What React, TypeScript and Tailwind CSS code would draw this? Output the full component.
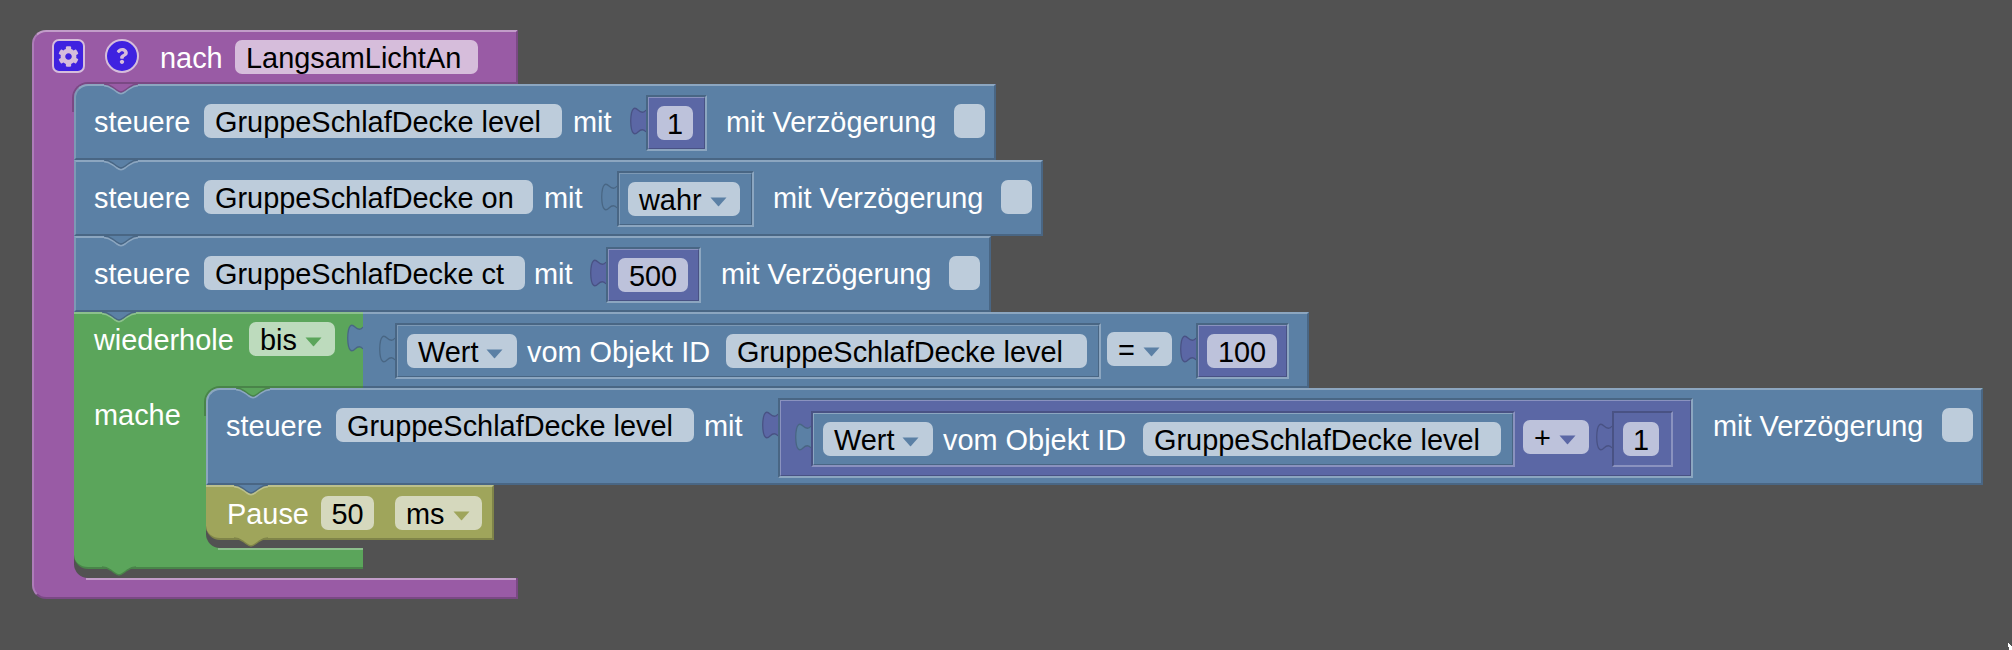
import React from 'react';
import { FaCog, FaQuestion } from 'react-icons/fa';

const BG = 'bg-[#525252]';

function Label({ className = '', children }: { className?: string; children: React.ReactNode }) {
  return <span className={`block shrink-0 text-white text-[28.9px] leading-[36px] whitespace-nowrap ${className}`}>{children}</span>;
}

function Field({ className = '', children }: { className?: string; children: React.ReactNode }) {
  return (
    <div className={`h-[34px] rounded-[7px] pl-[11px] text-black text-[28.9px] leading-[36px] whitespace-nowrap shrink-0 ${className}`}>
      {children}
    </div>
  );
}

function NumField({ className = '', children }: { className?: string; children: React.ReactNode }) {
  return (
    <div className={`h-[34px] rounded-[7px] text-center text-black text-[28.9px] leading-[36px] shrink-0 ${className}`}>
      {children}
    </div>
  );
}

function Arrow({ fill, className = '' }: { fill: string; className?: string }) {
  return (
    <svg width="17" height="10" viewBox="0 0 17 10" className={`shrink-0 ${className}`}>
      <path d="M0.5 0.5 H16.5 L9 9 Q8.5 9.5 8 9 Z" fill={fill} />
    </svg>
  );
}

function Drop({ className = '', arrow, children }: { className?: string; arrow: string; children: React.ReactNode }) {
  return (
    <div className={`h-[34px] rounded-[7px] pl-[11px] flex items-start text-black text-[28.9px] leading-[36px] whitespace-nowrap shrink-0 ${className}`}>
      <span>{children}</span>
      <Arrow fill={arrow} className="ml-[8px] mt-[15px]" />
    </div>
  );
}

function Check({ className = '' }: { className?: string }) {
  return <div className={`w-[31px] h-[34px] rounded-[7px] bg-[#bdccdb] shrink-0 ${className}`} />;
}

// puzzle tab sticking out to the left of a value block
function Tab({ fill, edge, className = '' }: { fill: string; edge: string; className?: string }) {
  const d = 'M16 3 C14 6 11 6 8 3 C5 0 1 -0.5 0.7 14 C1 28.5 5 28 8 25 C11 22 14 22 16 25';
  return (
    <svg width="16" height="29" viewBox="0 0 16 29" className={`shrink-0 overflow-visible ${className}`}>
      <path d={`${d} Z`} fill={fill} />
      <path d={d} fill="none" stroke={edge} strokeWidth="1.3" />
    </svg>
  );
}

// the bump of the block above, cut into the top of a statement block
function Notch({ fill, edge, rim, className = '' }: { fill: string; edge: string; rim?: string; className?: string }) {
  const d = 'M0 0 C5 0 7 2 10 4 L12 5.5 C14 7 15 8 17 8 C19 8 20 7 22 5.5 L24 4 C27 2 29 0 34 0';
  return (
    <svg width="34" height="11" viewBox="0 0 34 11" className={`absolute left-[28px] overflow-visible ${className}`}>
      {rim && <path d={d} fill="none" stroke={rim} strokeWidth="1.8" transform="translate(0 1.6)" />}
      <path d={`${d} Z`} fill={fill} />
      <path d={d} fill="none" stroke={edge} strokeWidth="1.4" />
    </svg>
  );
}

function SetBlock({ className = '', notch, children }: { className?: string; notch: [string, string]; children: React.ReactNode }) {
  return (
    <div className={`relative flex items-start h-[76px] pl-[18px] pt-[18px] bg-[#5b80a5] border-l-2 border-l-[#7d99b5] border-t-2 border-t-[#8ca6c0] border-b-2 border-b-[#496684] border-r-2 border-r-[#496684] ${className}`}>
      <Notch fill={notch[0]} edge={notch[1]} rim="#8ca6c0" className="-top-[2px] left-[26px]" />
      {children}
    </div>
  );
}

function VioletBox({ className = '', children }: { className?: string; children: React.ReactNode }) {
  return (
    <div className={`border-2 border-t-[#496684] border-l-[#496684] border-r-[#8ca6c0] border-b-[#8ca6c0] shrink-0 ${className}`}>
      <div className="h-full flex items-start bg-[#5b67a5] border border-t-[#8a92bf] border-l-[#8a92bf] border-r-[#495284] border-b-[#495284]">
        {children}
      </div>
    </div>
  );
}

function BlueBox({ className = '', children }: { className?: string; children: React.ReactNode }) {
  return (
    <div className={`border-2 border-t-[#496684] border-l-[#496684] border-r-[#8ca6c0] border-b-[#8ca6c0] shrink-0 ${className}`}>
      <div className="h-full flex items-start bg-[#5b80a5] border border-t-[#7d99b5] border-l-[#7d99b5] border-r-[#496684] border-b-[#496684]">
        {children}
      </div>
    </div>
  );
}

function BlueBoxOnViolet({ className = '', children }: { className?: string; children: React.ReactNode }) {
  return (
    <div className={`border-2 border-t-[#495284] border-l-[#495284] border-r-[#8a92bf] border-b-[#8a92bf] shrink-0 ${className}`}>
      <div className="h-full flex items-start bg-[#5b80a5] border border-t-[#8ca6c0] border-l-[#8ca6c0] border-r-[#496684] border-b-[#496684]">
        {children}
      </div>
    </div>
  );
}

function VioletOnViolet({ className = '', children }: { className?: string; children: React.ReactNode }) {
  return (
    <div className={`border-2 border-t-[#495284] border-l-[#495284] border-r-[#8a92bf] border-b-[#8a92bf] shrink-0 ${className}`}>
      <div className="h-full flex items-start bg-[#5b67a5]">{children}</div>
    </div>
  );
}

const BLUE: [string, string] = ['#5b80a5', '#496684'];
const PURPLE: [string, string] = ['#995ba5', '#7a4984'];
const GREEN: [string, string] = ['#5ba55b', '#498449'];

export default function App() {
  return (
    <div className={`relative w-[2012px] h-[650px] overflow-hidden ${BG} pl-[32px] pt-[30px] [font-family:'Liberation_Sans',Arial,sans-serif]`}>
      {/* hat block header */}
      <div className="flex items-start w-[486px] h-[54px] pl-[18px] pt-[7px] rounded-tl-[14px] bg-[#995ba5] border-t-2 border-t-[#c29dc9] border-l-2 border-l-[#ad7db8] border-r-2 border-r-[#7a4984]">
        <div className="w-[33px] h-[34px] rounded-[7px] bg-[#3f22e0] border-2 border-[#d6bddb] flex items-center justify-center shrink-0">
          <FaCog size={21} color="#d6bddb" />
        </div>
        <div className="ml-[20px] w-[34px] h-[34px] rounded-full bg-[#3f22e0] border-2 border-[#d6bddb] flex items-center justify-center shrink-0">
          <FaQuestion size={16} color="#d6bddb" />
        </div>
        <Label className="ml-[21px] w-[63px] mt-[1px]">nach</Label>
        <Field className="ml-[12px] mt-[1px] w-[243px] bg-[#d6bddb]">LangsamLichtAn</Field>
      </div>

      {/* arm of the hat block */}
      <div className="w-[486px] bg-[#995ba5] pl-[40px] border-l-2 border-l-[#ad7db8]">
        <div className={`w-[444px] ${BG} rounded-bl-[14px] pb-[9px]`}>
          <div className="relative w-[922px] bg-[#995ba5]">
            <div className="absolute -left-[2px] -top-[2px] w-[444px] h-[30px] rounded-tl-[16px] border-t-2 border-l-2 border-[#7a4984]" />
            <SetBlock notch={PURPLE} className="w-[922px] rounded-tl-[14px]">
              <Label className="w-[96px]">steuere</Label>
              <Field className="ml-[14px] w-[358px] bg-[#bdccdb]">GruppeSchlafDecke level</Field>
              <Label className="ml-[11px] w-[38px]">mit</Label>
              <Tab fill="#5b67a5" edge="#495284" className="ml-[19px] mt-[3px]" />
              <VioletBox className="-mt-[9px] w-[61px] h-[56px]">
                <NumField className="ml-[8px] mt-[8px] w-[36px] bg-[#bdc2db]">1</NumField>
              </VioletBox>
              <Label className="ml-[19px] w-[212px]">mit Verzögerung</Label>
              <Check className="ml-[16px]" />
            </SetBlock>
          </div>
          <SetBlock notch={BLUE} className="w-[969px]">
            <Label className="w-[96px]">steuere</Label>
            <Field className="ml-[14px] w-[329px] bg-[#bdccdb]">GruppeSchlafDecke on</Field>
            <Label className="ml-[11px] w-[38px]">mit</Label>
            <Tab fill="#5b80a5" edge="#496684" className="ml-[19px] mt-[3px]" />
            <BlueBox className="-mt-[9px] w-[137px] h-[56px]">
              <Drop className="ml-[8px] mt-[8px] w-[112px] bg-[#bdccdb]" arrow="#5b80a5">wahr</Drop>
            </BlueBox>
            <Label className="ml-[19px] w-[212px]">mit Verzögerung</Label>
            <Check className="ml-[16px]" />
          </SetBlock>
          <SetBlock notch={BLUE} className="w-[917px]">
            <Label className="w-[96px]">steuere</Label>
            <Field className="ml-[14px] w-[321px] bg-[#bdccdb]">GruppeSchlafDecke ct</Field>
            <Label className="ml-[9px] w-[38px]">mit</Label>
            <Tab fill="#5b67a5" edge="#495284" className="ml-[18px] mt-[3px]" />
            <VioletBox className="-mt-[9px] w-[95px] h-[56px]">
              <NumField className="ml-[9px] mt-[8px] w-[70px] bg-[#bdc2db]">500</NumField>
            </VioletBox>
            <Label className="ml-[20px] w-[212px]">mit Verzögerung</Label>
            <Check className="ml-[16px]" />
          </SetBlock>

          {/* repeat block */}
          <div className="relative">
            <Notch fill={BLUE[0]} edge={BLUE[1]} rim="#8cc08c" className="top-0 z-10" />
            <div className="flex items-start h-[76px]">
              <div className="flex items-start w-[289px] h-[76px] pl-[20px] pt-[8px] bg-[#5ba55b] border-t-2 border-t-[#8cc08c] shrink-0">
                <Label className="w-[140px]">wiederhole</Label>
                <Drop className="ml-[15px] w-[86px] bg-[#bddbbd]" arrow="#5ba55b">bis</Drop>
                <Tab fill="#5b80a5" edge="#496684" className="ml-[12px] mt-[2px]" />
              </div>
              <div className="flex items-start w-[946px] h-[76px] pt-[9px] pl-[16px] bg-[#5b80a5] border-t-2 border-t-[#8ca6c0] border-r-2 border-r-[#496684] border-b-2 border-b-[#496684] shrink-0">
                <Tab fill="#5b80a5" edge="#496684" className="mt-[12px]" />
                <BlueBox className="w-[706px] h-[56px]">
                  <Drop className="ml-[9px] mt-[8px] w-[110px] bg-[#bdccdb]" arrow="#5b80a5">Wert</Drop>
                  <Label className="ml-[10px] mt-[8px] w-[183px]">vom Objekt ID</Label>
                  <Field className="ml-[16px] mt-[8px] w-[361px] bg-[#bdccdb]">GruppeSchlafDecke level</Field>
                </BlueBox>
                <Drop className="ml-[6px] mt-[9px] w-[65px] bg-[#bdccdb]" arrow="#5b80a5">=</Drop>
                <Tab fill="#5b67a5" edge="#495284" className="ml-[8px] mt-[12px]" />
                <VioletBox className="w-[93px] h-[56px]">
                  <NumField className="ml-[8px] mt-[8px] w-[70px] bg-[#bdc2db]">100</NumField>
                </VioletBox>
              </div>
            </div>
            <div className="w-[289px] flex bg-[#5ba55b]">
              <div className="w-[132px] pl-[20px] pt-[9px] shrink-0">
                <Label>mache</Label>
              </div>
              <div className={`w-[157px] ${BG} rounded-bl-[14px] pb-[8px]`}>
                <div className="relative w-[1777px] bg-[#5ba55b]">
                  <div className="absolute -left-[2px] -top-[2px] w-[159px] h-[30px] rounded-tl-[16px] border-t-2 border-l-2 border-[#498449]" />
                  <div className="relative flex items-start w-[1777px] h-[97px] pl-[18px] pt-[18px] rounded-tl-[14px] bg-[#5b80a5] border-l-2 border-l-[#8ca6c0] border-t-2 border-t-[#8ca6c0] border-b-2 border-b-[#496684] border-r-2 border-r-[#496684]">
                    <Notch fill={GREEN[0]} edge={GREEN[1]} rim="#8ca6c0" className="-top-[2px] left-[26px]" />
                    <Label className="w-[96px]">steuere</Label>
                    <Field className="ml-[14px] w-[358px] bg-[#bdccdb]">GruppeSchlafDecke level</Field>
                    <Label className="ml-[10px] w-[38px]">mit</Label>
                    <Tab fill="#5b67a5" edge="#495284" className="ml-[20px] mt-[3px]" />
                    <VioletBox className="-mt-[10px] w-[915px] h-[80px]">
                      <div className="flex items-start pl-[14px] pt-[10px]">
                        <Tab fill="#5b80a5" edge="#496684" className="mt-[12px]" />
                        <BlueBoxOnViolet className="w-[704px] h-[56px]">
                          <Drop className="ml-[9px] mt-[8px] w-[110px] bg-[#bdccdb]" arrow="#5b80a5">Wert</Drop>
                          <Label className="ml-[10px] mt-[8px] w-[183px]">vom Objekt ID</Label>
                          <Field className="ml-[17px] mt-[8px] w-[358px] bg-[#bdccdb]">GruppeSchlafDecke level</Field>
                        </BlueBoxOnViolet>
                        <Drop className="ml-[8px] mt-[9px] w-[66px] bg-[#bdc2db]" arrow="#5b67a5">+</Drop>
                        <Tab fill="#5b67a5" edge="#495284" className="ml-[7px] mt-[12px]" />
                        <VioletOnViolet className="w-[61px] h-[56px]">
                          <NumField className="ml-[9px] mt-[9px] w-[36px] bg-[#bdc2db]">1</NumField>
                        </VioletOnViolet>
                      </div>
                    </VioletBox>
                    <Label className="ml-[20px] w-[212px]">mit Verzögerung</Label>
                    <Check className="ml-[17px]" />
                  </div>
                </div>
                <div className="relative flex items-start w-[288px] h-[55px] pl-[21px] pt-[9px] rounded-bl-[14px] bg-[#9fa55b] border-t-2 border-t-[#bcc08c] border-r-2 border-r-[#7f8449] border-b-2 border-b-[#7f8449]">
                  <Notch fill={BLUE[0]} edge={BLUE[1]} rim="#bcc08c" className="-top-[2px]" />
                  <Label className="w-[82px]">Pause</Label>
                  <NumField className="ml-[12px] w-[53px] bg-[#d5d8bd]">50</NumField>
                  <Drop className="ml-[21px] w-[87px] bg-[#d5d8bd]" arrow="#9fa55b">ms</Drop>
                  <Notch fill="#9fa55b" edge="#7f8449" className="top-full" />
                </div>
              </div>
            </div>
            <div className="relative w-[289px] h-[21px] rounded-bl-[14px] bg-[#5ba55b] border-b-2 border-b-[#498449]">
              <div className="ml-[144px] h-[2px] bg-[#8cc08c]" />
              <Notch fill="#5ba55b" edge="#498449" className="top-full" />
            </div>
          </div>
        </div>
      </div>

      {/* bottom of the hat block */}
      <div className="w-[486px] h-[21px] rounded-bl-[14px] bg-[#995ba5] border-l-2 border-l-[#ad7db8] border-b-2 border-b-[#7a4984] border-r-2 border-r-[#7a4984]">
        <div className="ml-[52px] h-[2px] bg-[#c29dc9]" />
      </div>

      {/* mouse pointer cut off by the window corner */}
      <svg width="4" height="7" viewBox="0 0 4 7" className="absolute right-0 bottom-0">
        <path d="M0 0 H1 V1 H2 V2 H3 V3 H4 V7 H1 V4 H0 Z" fill="#ffffff" />
      </svg>
    </div>
  );
}
